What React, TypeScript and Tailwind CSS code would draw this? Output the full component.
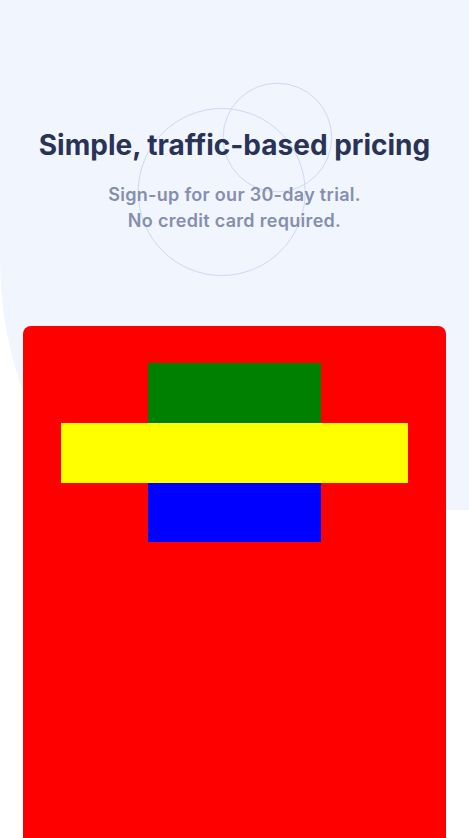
export default function App() {
  return (
    <div className="min-h-screen bg-white font-['Inter','Noto_Sans',sans-serif]">
      {/* header band with the curved corner */}
      <section className="relative h-[510px] bg-[#f1f5fe] rounded-bl-[157px_250px] pt-[127px] text-center">
        <svg
          className="absolute left-0 top-0 pointer-events-none"
          width="469"
          height="300"
          viewBox="0 0 469 300"
          fill="none"
        >
          <circle cx="221.7" cy="192" r="83.5" stroke="#cfd8ef" strokeWidth="1" />
          <circle cx="277.4" cy="137.5" r="54.3" stroke="#cfd8ef" strokeWidth="1" />
        </svg>
        <h1 className="relative text-[28px] leading-9 font-bold text-[#293356]">
          Simple, traffic-based pricing
        </h1>
        <p className="relative mt-[19px] text-[18px] leading-[26px] font-semibold tracking-[0.3px] text-[#858fad]">
          Sign-up for our 30-day trial.
          <br />
          No credit card required.
        </p>
      </section>

      {/* card */}
      <div className="-mt-[184px] mx-[23px] relative rounded-lg bg-[#ff0000] px-[38px] pt-[37px] pb-[340px]">
        <div className="mx-auto w-1/2 h-[60px] bg-[#008000]" />
        <div className="w-full h-[60px] bg-[#ffff00]" />
        <div className="mx-auto w-1/2 h-[59px] bg-[#0000ff]" />
      </div>
    </div>
  );
}
